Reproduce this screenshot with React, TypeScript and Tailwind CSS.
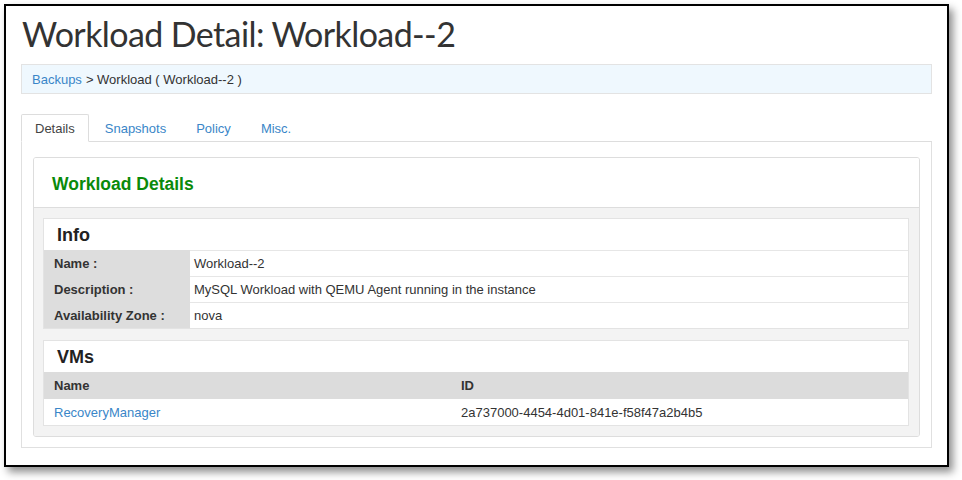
const infoRows = [
  { label: "Name :", value: "Workload--2" },
  { label: "Description :", value: "MySQL Workload with QEMU Agent running in the instance" },
  { label: "Availability Zone :", value: "nova" },
];

const tabs = ["Details", "Snapshots", "Policy", "Misc."];

const App = () => {
  return (
    <div className="w-[962px] h-[480px] bg-white font-['Liberation_Sans',Arial,sans-serif] text-[13px] text-[#333]">
      <div className="absolute left-[4px] top-[4px] w-[945px] h-[463px] border-2 border-black bg-white shadow-[4px_5px_8px_rgba(0,0,0,0.45)] px-[15px] pt-[8px]">
        <h1 className="font-['Lato',sans-serif] text-[34px] leading-[40px] tracking-[-0.6px] text-[#333] pl-[1px]">
          Workload Detail: Workload--2
        </h1>

        <div className="mt-[10px] h-[30px] border border-[#e3e3e3] bg-[#eff8fe] flex items-center pl-[10px] pt-[1px]">
          <a className="text-[#3a86c8]">Backups</a>
          <span className="ml-[4px]">&gt; Workload ( Workload--2 )</span>
        </div>

        <div className="mt-[20px] flex h-[28px] border-b border-[#dddddd]">
          {tabs.map((tab, i) => (
            <div
              key={tab}
              className={`h-[28px] mr-[2px] px-[13px] pt-[1px] flex items-center border rounded-t-[2px] ${
                i === 0
                  ? "bg-white border-[#dddddd] border-b-white text-[#444] -mb-px"
                  : "border-transparent text-[#3a86c8]"
              }`}
            >
              {tab}
            </div>
          ))}
        </div>

        <div className="border border-t-0 border-[#e0e0e0] pt-[15px] px-[11px] pb-[10px]">
          <div className="border border-[#dddddd] rounded-[3px] overflow-hidden">
            <div className="h-[50px] bg-white border-b border-[#dddddd] flex items-center pl-[18px] pt-[3px]">
              <h3 className="text-[17.5px] font-bold text-[#0a8a0a]">Workload Details</h3>
            </div>

            <div className="bg-[#f3f3f3] pl-[9px] pr-[10px] py-[10px] flex flex-col gap-[11px]">
              <div className="border border-[#e3e3e3] bg-white">
                <div className="h-[31px] flex items-center pl-[13px] pt-[2px]">
                  <h4 className="text-[18px] font-bold text-[#222]">Info</h4>
                </div>
                {infoRows.map((row) => (
                  <div key={row.label} className="flex h-[26px]">
                    <div className="w-[146px] bg-[#dddddd] flex items-center pl-[10px] pt-[1px] font-bold text-[#333]">
                      {row.label}
                    </div>
                    <div className="flex-1 flex items-center pl-[4px] pt-[1px] border-t border-[#e6e6e6]">
                      {row.value}
                    </div>
                  </div>
                ))}
              </div>

              <div className="border border-[#e3e3e3] bg-white">
                <div className="h-[31px] flex items-center pl-[13px] pt-[2px]">
                  <h4 className="text-[18px] font-bold text-[#222]">VMs</h4>
                </div>
                <div className="flex h-[27px] bg-[#dcdcdc] font-bold items-center pt-[1px]">
                  <div className="w-[417px] pl-[10px]">Name</div>
                  <div className="flex-1">ID</div>
                </div>
                <div className="flex h-[26px] items-center pt-[1px]">
                  <div className="w-[417px] pl-[10px] text-[#3a86c8]">RecoveryManager</div>
                  <div className="flex-1">2a737000-4454-4d01-841e-f58f47a2b4b5</div>
                </div>
              </div>
            </div>
          </div>
        </div>
      </div>
    </div>
  );
};

export default App;
